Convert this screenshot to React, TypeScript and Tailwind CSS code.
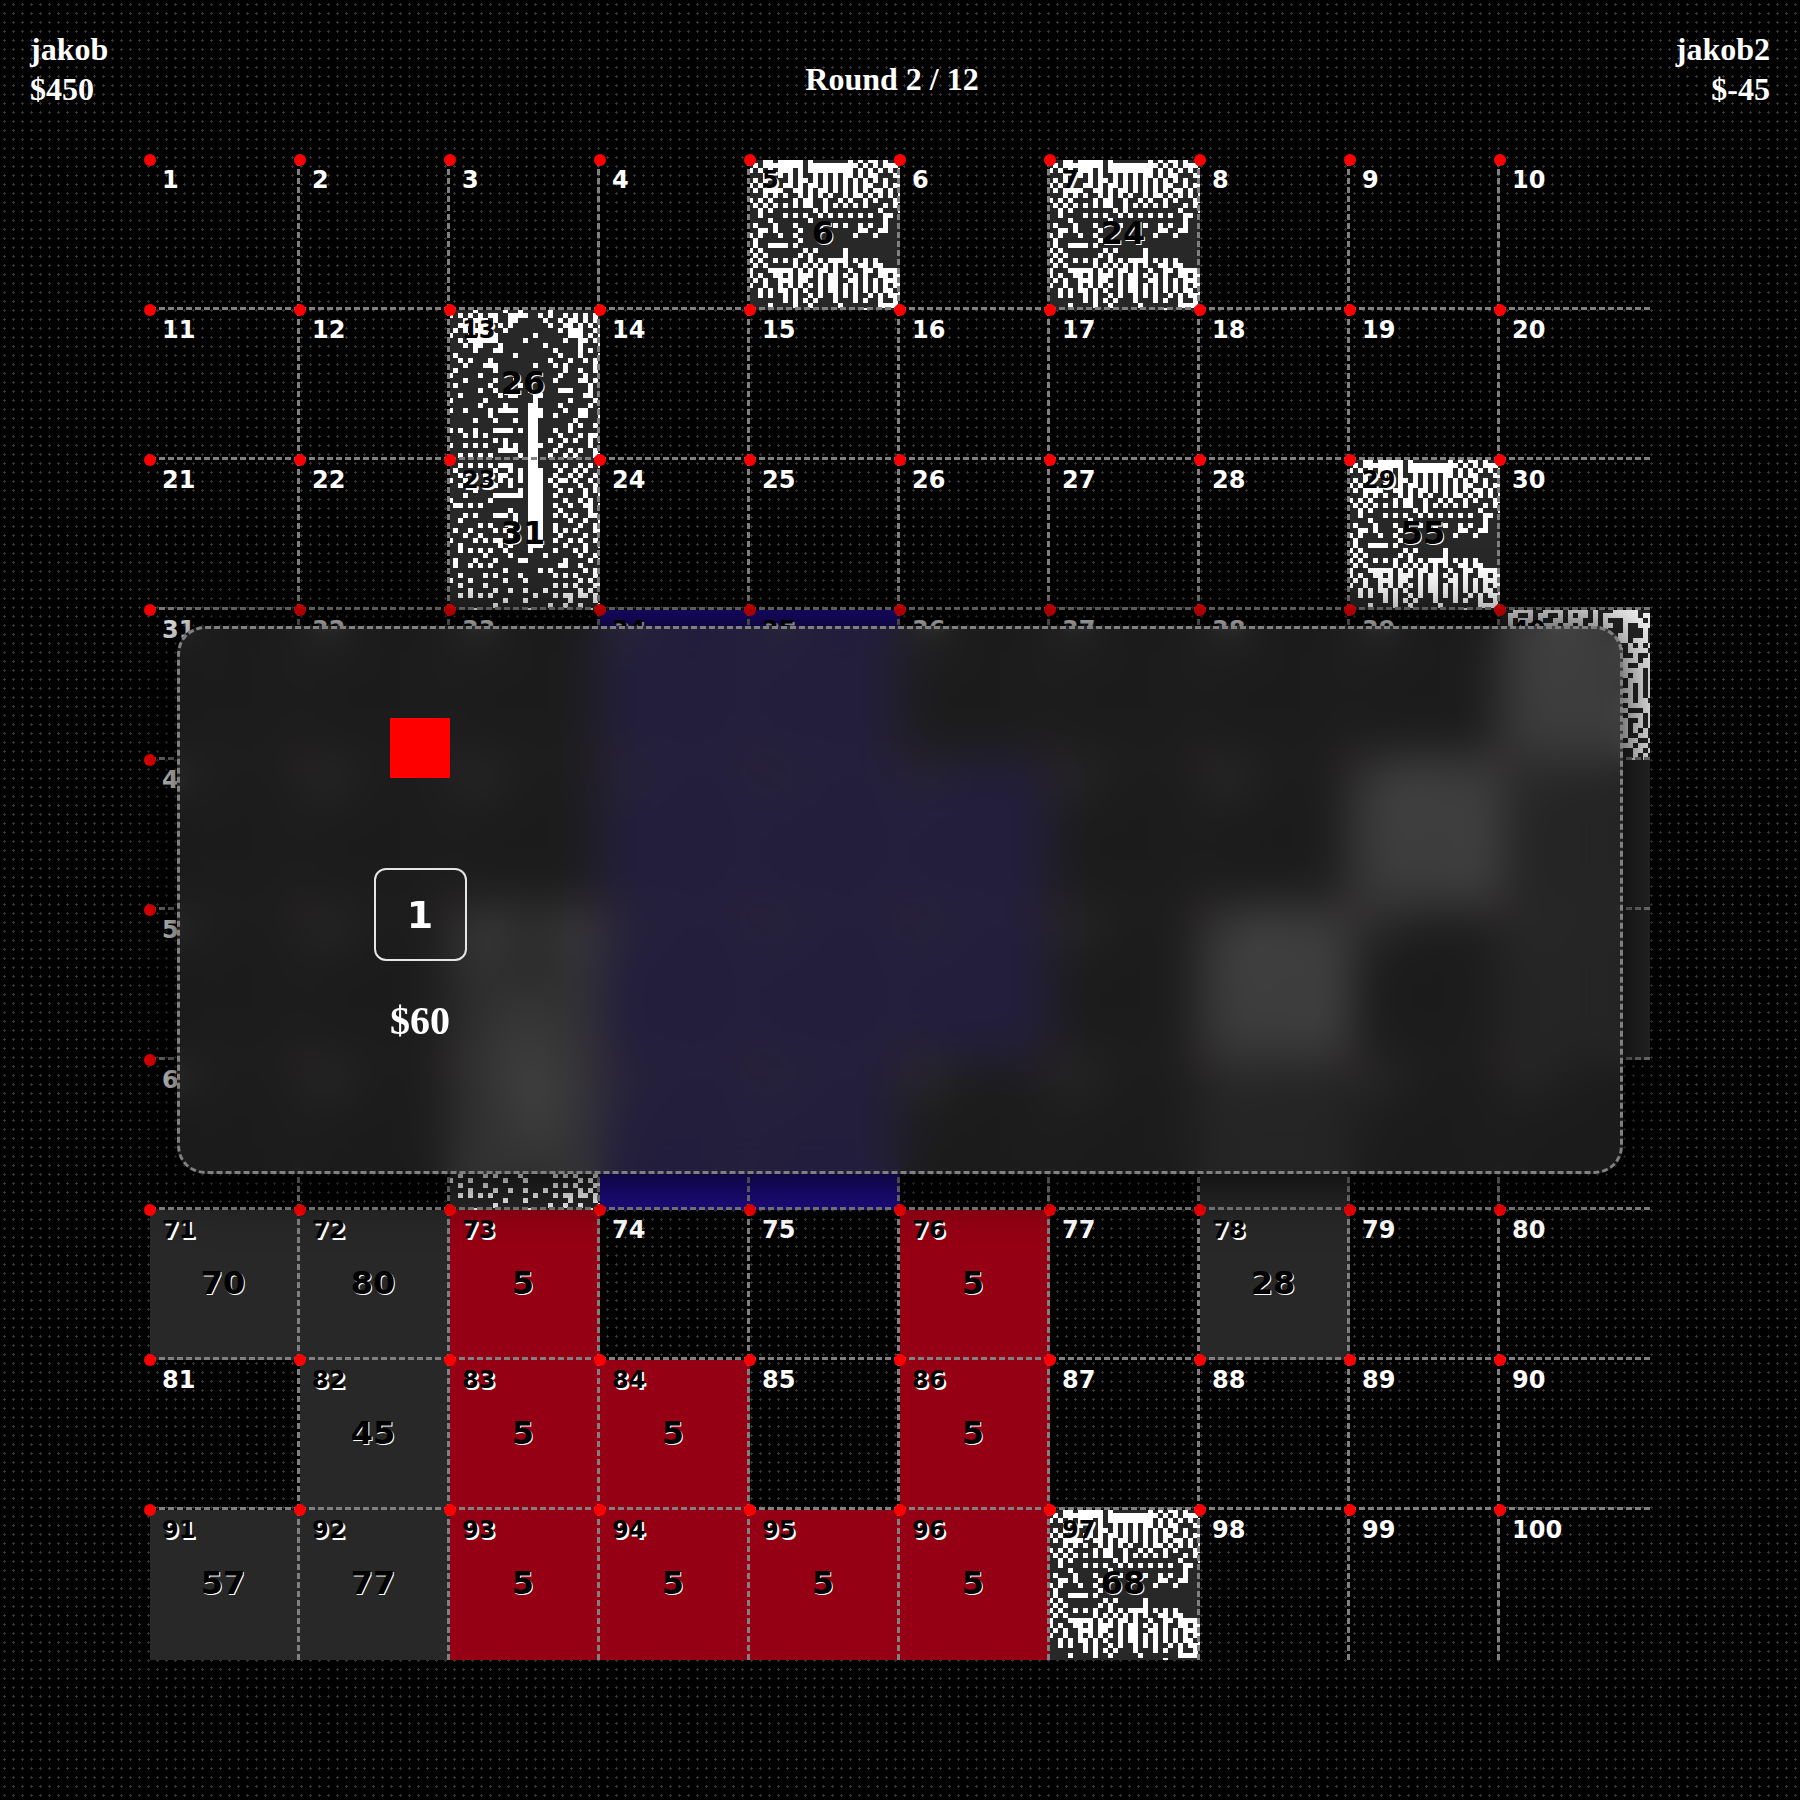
import React from "react";

type Kind = "open" | "grey" | "red" | "blue" | "noiseA" | "noiseB" | "noiseC" | "noiseD";

const NOISE: Record<string, string[]> = {
  noiseA: [
    "#..##.#####.#.......#.#.##.#...",
    ".#.########.##########.#.#.###.",
    "#.#.#.###.#.#########.#.#.#.#.#",
    "...#..#.#.#..#.#.#.##.#.##...##",
    ".#.#....#.##.#.#.#.#.#.#.#.#..#",
    "#.#....##.#.##.#.#.#.#.##..#.##",
    ".#.####..##.#.##.#.#.#.#.##.#.#",
    "...#.#.#..#.#.#.#..#.##.#.#.#.#",
    "#.#.#....#.##..#..#.#..#.#...##",
    ".#.#.#.#.#.##..#.#.#.#.#...#.#.",
    "..#.#........#.#..........#...#",
    "..#....#.#.#..#.#.#.#.#.#..##..",
    "....#.......#..............#...",
    ".#...#...#....#..#.#..#.#..#..#",
    "..##.#....#...........##..##...",
    "#.#...#..#...........#...#.....",
    ".#........#....................",
    ".#..####.#.....................",
    "#.#........#.#.....#...........",
    ".#.#......#.#......#...........",
    "#.#..#.#.#..#.#.####.#.#.#.....",
    ".#.#.....#.#.#.#.#.#..##.##....",
    "#...#####.#.#.##.#..#..##.####.",
    "#.#..##.#.###.#.##.#.#.#..##.##",
    ".#.#..###.##..#.##..##.#.#.###.",
    "#..#..#.#.#.#.#.##.#.#.#.#.#.##",
    "..#.#.##.#.#..#.##.#.#.#.#.##.#",
    "..#.#..#.#..#.#..#.#.#..#.#.###",
    ".......#.#.#.#...#...#.#..#..#.",
    "....#....#..#.....#.......####.",
    ".......................#.......",
  ],
  noiseB: [
    ".....#.....#..#.....#..........",
    "#.#.#.#.##..####..#.#..#.#.#.#.",
    "...#.###.#..##.....#..#.##.#.#.",
    "..##..##..#.#.......#..##.#.#.#",
    ".#.#.###...#..........#.###..#.",
    "#...#.##.#.......#......###.#.#",
    "..#.######.....#.......#..##.#.",
    "...#.##...#........#......#...#",
    ".....#...##..........#....#.#..",
    ".#...........#........#...#...#",
    "..#.#...#...........#...#..#.#.",
    "...#...###.......#...#.#.....#.",
    ".#.......#.............#..#..#.",
    "#.....#...............#....#..#",
    "...#.....#...#.......#....##.#.",
    ".#......#.....#.............#..",
    "......#..#......#.....###...#..",
    "..#.......#.##...##........##..",
    "#......#.........#......#....#.",
    "......#....#....##....#.....#..",
    "#..#....#.####..###....#..##..#",
    "........#.......###..#....##..#",
    ".....#...#...#..##.......#.....",
    "................##......#.#..#.",
    "#.#..#...####.#.##...#..#......",
    "...#.#.#........##....#...#.##.",
    ".........#.#....##..#..#.#..#.#",
    "#..#.#.#...#.#..###...#.....#..",
    "..........####..##...#..#.#..#.",
    "..#.#.#.#.....#.##..#..#.#...##",
    "...............###.............",
  ],
  noiseC: [
    "................##.............",
    "..#.#.#.#.###...##...#.#..#.#.#",
    ".#.......#..#.#.###...#..#.#...",
    "..#..#.##.##..#.###..#..#.#..#.",
    "#..#......#.#.#.###.#.##.#..#.#",
    "..#.#..#.#..#...###..#....#..#.",
    ".....#........#.###...#.#..#.#.",
    "...#.....######.###..#.....#..#",
    "#.......#.......###....#..#.#..",
    ".##.#.#.........###..#..#..##.#",
    "............#...###...#.....#..",
    "...#.#...###.#..###..#.#.#..##.",
    "..#..........#..###.....#..#..#",
    "......#.#...#...###..#....#..#.",
    ".#..#....#.#.#..###..#.#.#...##",
    "...#..#.....#...###...#....#...",
    "#....#.#.##.....###..#..#.#..#.",
    "..#.......#.#...###....#...#..#",
    "..#.#.#.#..#....#....#...#.#...",
    ".......#....#......#......#..#.",
    ".#...#...#....##.......#....#.#",
    ".#..#.#.#.............##..#....",
    "...........#......#.#......#.#.",
    "..#....#.#....#......#.#.#...#.",
    "#...#......#...#..........#.#..",
    "..#....#.............#.#.#...##",
    "....#....#..#..#...#......#.#..",
    "..#.#.#.#........#...#.##.##.#.",
    "...........#...#........#....#.",
    ".........#..........#..#..#...#",
    ".....#..........#.......#...#..",
  ],
  noiseD: [
    "...####..####.####.#...#####...",
    "..##..#.##..#.#.##.#.#######.##",
    "..#.###.#..##.###..#.#...####.#",
    "..#..#..####.##.#.##.##..#..###",
    "...#.#.#.####.#.##..##...#...#.",
    "..###..##..#.##..#..#...##...#.",
    ".#.#.##..#.##..#.#.#...###.###.",
    "..#.#..#.##..#.#.#..#.##..#.#.#",
    "#..#.#.#..#.##..#.#...###.####.",
    ".#..#.#.#..#.#.##..#..##...#..#",
    "..#..#.#.##..#.#.#.#..#..###.##",
    ".#.#.##.#.#.##..#.#.#..###..###",
    "..#.#..#.#.#..#.#.##..#..####.#",
    "#..#.#..#.#.#.##.#..#..###.##.#",
    ".#..#.#.##.#.#..#.#..#..#.###.#",
    "..#..##..#..#.#.#.#..#....#.#.#",
    ".#.#..#.#.#.#..#.#.#..#..##.#.#",
    "..#.#.#.#..#.#.##..#..###.#.#.#",
    "#..#..#.#.#.#.#.#.#..#..###.##.",
    ".#.#.#..#.##..#.#..#..##..#####",
    "..#..#.#.#..#.#..#.#..#.##...##",
    ".#.#.##..#.#..#.#.#..###..###.#",
    "..#.#..#.#..#.#.#.#..#..##..#.#",
    "#..#.#.#..#.#.##..#..##.##.##.#",
    ".#.#..#.#.#..#.#.#.#..#..#.#.#.",
    "..#.#.#..#.#.#..#.#..##.##..##.",
    ".#..#..#.#.#.#.#..#...##..##..#",
    "..#.#.#.#..#..#.#.#.#.#..##.##.",
    "#..#.#..#.#.#.#..#..#..##..##.#",
    ".#.#..#.#..#.#.##..#..#.#..#.#.",
    "..#.#.#..#.#..#.#.#..##...##.#.",
  ],
};

const toPath = (rows: string[]) =>
  rows
    .map((row, y) =>
      Array.from(row.matchAll(/#+/g))
        .map((run) => `M${run.index * 5} ${y * 5}h${run[0].length * 5}v5h-${run[0].length * 5}z`)
        .join(""),
    )
    .join("");

const PATHS: Record<string, string> = Object.fromEntries(
  Object.entries(NOISE).map(([name, rows]) => [name, toPath(rows)]),
);

const CELLS: Record<number, [Kind, number?]> = {
  5: ["noiseA", 6],
  7: ["noiseA", 24],
  13: ["noiseB", 26],
  23: ["noiseC", 31],
  29: ["noiseA", 55],
  34: ["blue"],
  35: ["blue"],
  40: ["noiseD"],
  44: ["blue"],
  45: ["blue"],
  46: ["blue"],
  49: ["noiseD"],
  50: ["grey"],
  53: ["noiseB"],
  54: ["blue"],
  55: ["blue"],
  56: ["blue"],
  58: ["noiseD"],
  60: ["grey"],
  63: ["noiseC"],
  64: ["blue"],
  65: ["blue"],
  68: ["grey"],
  71: ["grey", 70],
  72: ["grey", 80],
  73: ["red", 5],
  76: ["red", 5],
  78: ["grey", 28],
  82: ["grey", 45],
  83: ["red", 5],
  84: ["red", 5],
  86: ["red", 5],
  91: ["grey", 57],
  92: ["grey", 77],
  93: ["red", 5],
  94: ["red", 5],
  95: ["red", 5],
  96: ["red", 5],
  97: ["noiseA", 68],
};

const FILL: Record<Kind, string> = {
  open: "",
  grey: "bg-[#282828]",
  red: "bg-[#960014]",
  blue: "bg-[#1e0c85]",
  noiseA: "bg-[#282828]",
  noiseB: "bg-[#282828]",
  noiseC: "bg-[#282828]",
  noiseD: "bg-[#282828]",
};

function Cell({ n }: { n: number }) {
  const [kind, value] = CELLS[n] ?? (["open"] as [Kind, number?]);
  const taken = kind !== "open";
  const noise = PATHS[kind];
  return (
    <div className={`relative aspect-square ${FILL[kind]}`}>
      {noise && (
        <svg className="absolute inset-0 size-full" viewBox="2 2 150 150" aria-hidden="true">
          <path d={noise} fill="#fff" />
        </svg>
      )}
      <div
        className={`absolute inset-0 border-dashed border-[#808080] ${n % 10 ? "border-r-3" : ""} ${
          n <= 90 ? "border-b-3" : ""
        }`}
      />
      <span
        className={`absolute top-1.5 left-3 text-2xl leading-7 ${
          taken ? "text-black [text-shadow:2px_2px_0_#fff]" : "text-white"
        }`}
      >
        {n}
      </span>
      {value !== undefined && (
        <span className="absolute inset-0 flex items-center justify-center pr-1 pb-1 text-[32px] text-black [text-shadow:1px_1px_0_#fff]">
          {value}
        </span>
      )}
      <i className="absolute -top-1.5 -left-1.5 size-3 rounded-full bg-[#ff0000]" />
    </div>
  );
}

export default function App() {
  return (
    <div className="relative min-h-screen bg-black bg-[radial-gradient(circle_at_4.5px_4.5px,#363636_1.1px,transparent_1.4px)] bg-[length:9px_9px] pb-[140px] font-['Liberation_Serif',serif] font-bold text-white">
      <header className="flex h-40 items-start justify-between px-[30px] pt-[29px] text-[32px] leading-10">
        <div>
          <p>jakob</p>
          <p>$450</p>
        </div>
        <h1 className="pt-[30px]">Round 2 / 12</h1>
        <div className="text-right">
          <p>jakob2</p>
          <p>$-45</p>
        </div>
      </header>

      <main className="mx-auto grid w-5/6 grid-cols-10 font-['DejaVu_Sans',sans-serif]">
        {Array.from({ length: 100 }, (_, i) => (
          <Cell key={i} n={i + 1} />
        ))}
      </main>

      <div className="absolute inset-0 flex items-center justify-center">
        <section
          aria-label="Shop"
          className="relative box-content w-4/5 rounded-[28px] border-3 border-transparent shadow-[0_0_64px_#000]"
        >
          {/* Stacked blurs keep the frosted edge soft right up to the border. */}
          <div className="absolute -inset-[3px] rounded-[28px] backdrop-blur-[2px]" />
          <div className="absolute -inset-[3px] rounded-[28px] backdrop-blur-[6px]" />
          <div className="absolute -inset-[3px] rounded-[28px] backdrop-blur-[12px]" />
          <div className="absolute -inset-[3px] rounded-[28px] border-3 border-dashed border-[#808080] bg-[#242424]/75 backdrop-blur-[20px]" />
          <div className="relative grid grid-cols-3">
            <div className="flex flex-col items-center pt-[89px] pb-[126px]">
              <div className="size-[60px] bg-[#ff0000]" />
              <input
                aria-label="Amount"
                defaultValue="1"
                className="mt-[90px] size-[93px] rounded-xl border-2 border-[#e5e5e5] bg-transparent text-center font-['DejaVu_Sans',sans-serif] text-[38px] text-white outline-none"
              />
              <p className="mt-9 text-[40px] leading-12">$60</p>
            </div>
          </div>
        </section>
      </div>
    </div>
  );
}
